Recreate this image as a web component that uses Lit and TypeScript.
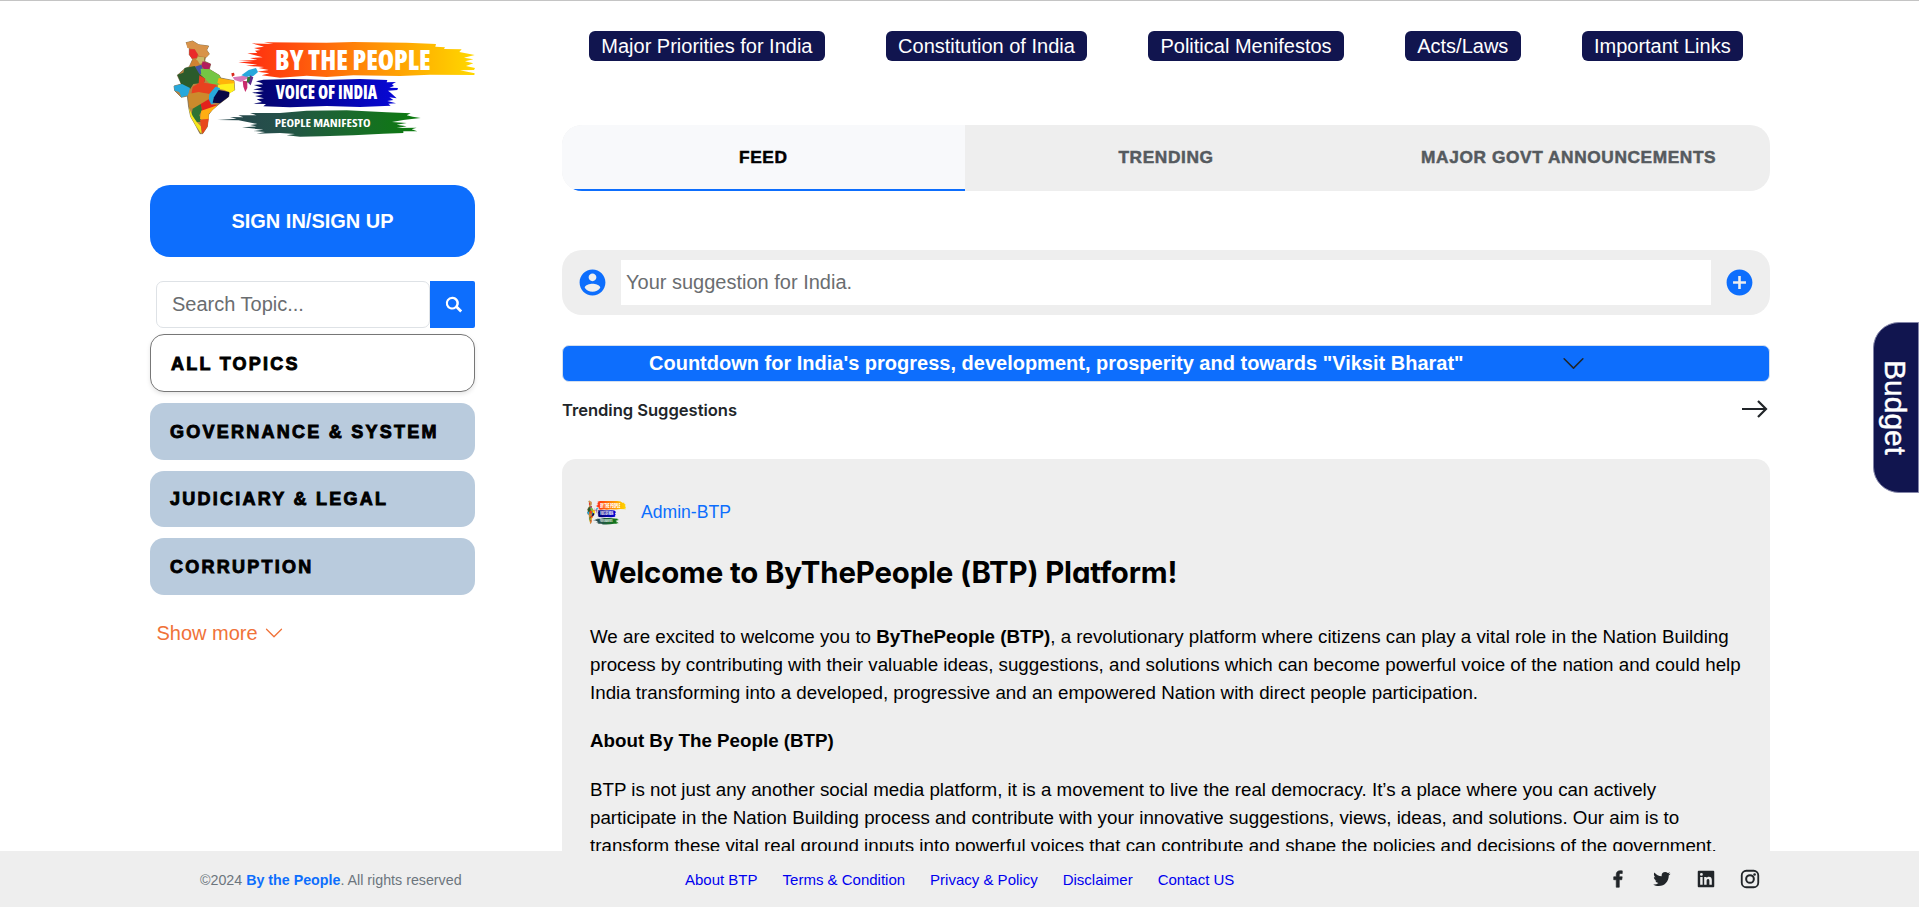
import { LitElement, html, css, svg } from "lit";
import { customElement } from "lit/decorators.js";
import { classMap } from "lit/directives/class-map.js";

const NAV = ["Major Priorities for India", "Constitution of India", "Political Menifestos", "Acts/Laws", "Important Links"];
const TABS = ["FEED", "TRENDING", "MAJOR GOVT ANNOUNCEMENTS"];
const TOPICS = ["ALL TOPICS", "GOVERNANCE & SYSTEM", "JUDICIARY & LEGAL", "CORRUPTION"];
const LINKS = ["About BTP", "Terms & Condition", "Privacy & Policy", "Disclaimer", "Contact US"];

const logoArt = svg`
  <defs>
    <linearGradient id="saffron" gradientUnits="userSpaceOnUse" x1="300" y1="0" x2="1005" y2="0">
      <stop offset="0" stop-color="#ff2a10"/><stop offset=".2" stop-color="#ff4a0e"/>
      <stop offset=".5" stop-color="#ff8408"/><stop offset=".8" stop-color="#ffb800"/>
      <stop offset="1" stop-color="#ffd800"/>
    </linearGradient>
    <linearGradient id="navy" gradientUnits="userSpaceOnUse" x1="340" y1="0" x2="775" y2="0">
      <stop offset="0" stop-color="#04046a"/><stop offset=".5" stop-color="#0404a0"/><stop offset="1" stop-color="#0808d8"/>
    </linearGradient>
    <linearGradient id="green" gradientUnits="userSpaceOnUse" x1="230" y1="0" x2="845" y2="0">
      <stop offset="0" stop-color="#27454c"/><stop offset=".3" stop-color="#25504a"/>
      <stop offset=".65" stop-color="#1a6a2c"/><stop offset="1" stop-color="#0b7c0c"/>
    </linearGradient>
  </defs>
  <path fill="url(#saffron)" d="M335 70L400 72L372 67L560 68L640 66L800 68L888 72L886 80L915 82L912 87L965 88L958 96L1004 105L972 113L1000 118L975 124L1000 130L978 138L1005 144L1002 150L960 151L1004 160L1003 165L870 164L780 168L640 166L560 171L500 167L420 173L365 166L388 160L352 155L386 150L356 144L372 141L318 137L352 134L295 127L340 124L296 122L352 120L330 114L368 112L322 100L352 99L345 92L362 90L342 84L372 80Z"/>
  <path fill="url(#navy)" d="M370 179L460 177L560 180L660 177L742 180L740 187L768 186L756 193L762 198L748 203L774 204L772 210L744 212L752 218L770 235L748 232L760 240L742 243L768 250L745 251L752 257L660 261L560 258L450 262L370 259L378 252L340 251L366 246L350 238L372 235L345 228L368 224L336 218L372 213L340 208L366 203L342 195L370 193L362 188L348 184Z"/>
  <path fill="url(#green)" d="M330 279L420 279L500 272L620 271L740 277L812 280L800 286L818 290L842 294L815 297L790 300L756 306L800 309L770 314L800 319L770 324L830 323L815 328L832 334L790 334L790 339L730 341L640 346L545 349L480 350L440 346L465 342L420 339L350 341L375 336L340 333L370 329L306 322L350 319L330 315L352 312L296 301L232 300L290 296L270 291L310 292L295 286L350 286Z"/>
  <path fill="#b98440" stroke="#6a5a3a" stroke-width="2" d="M138 68L158 63L176 74L206 78L200 90L208 102L196 114L194 124L212 132L208 148L238 166L242 174L282 182L284 210L268 218L266 230L240 250L216 270L206 284L202 320L188 341L180 341L168 318L152 290L146 262L142 228L124 232L104 212L102 198L124 192L112 166L134 146L148 140L158 118L148 104L148 84Z"/>
  <path fill="#d8934a" d="M138 68L158 63L176 74L206 78L200 90L208 102L200 112L178 108L164 88L142 84Z"/>
  <path fill="#ea2a2a" d="M148 88L164 88L174 104L170 114L156 116L148 104Z"/>
  <path fill="#c9bb6a" d="M174 110L192 112L192 126L180 132L168 120Z"/>
  <path fill="#cf8232" d="M160 116L174 122L178 134L164 142L148 140Z"/>
  <path fill="#b21d5c" d="M188 124L212 132L208 146L194 150L184 138Z"/>
  <path fill="#4054a8" d="M164 140L184 134L192 158L178 164Z"/>
  <path fill="#2b5b2b" d="M134 144L164 138L178 162L196 174L192 188L160 192L150 208L126 198L112 164L130 158Z"/>
  <path fill="#74c644" d="M182 146L208 148L238 166L242 176L234 196L208 190L184 166Z"/>
  <path fill="#e8411f" d="M178 166L196 176L192 188L230 194L228 212L206 222L176 218L154 224L158 200L176 190Z"/>
  <path fill="#ffb40a" d="M236 174L282 182L284 192L244 196L232 188Z"/>
  <path fill="#fff01c" d="M234 194L282 190L284 210L270 220L254 210L234 206Z"/>
  <path fill="#27a8dc" d="M102 198L126 192L150 204L144 226L124 232L118 216L104 212Z"/>
  <path fill="#27a8dc" d="M226 200L240 204L236 218L220 238L224 250L208 254L206 224Z"/>
  <path fill="#080845" d="M236 210L268 216L266 230L240 250L218 248L222 232Z"/>
  <path fill="#cc8a2c" d="M144 222L176 216L208 222L206 238L182 252L168 268L148 262Z"/>
  <path fill="#e3221c" d="M182 252L206 238L214 254L232 254L216 270L186 274Z"/>
  <path fill="#2e7434" d="M158 266L182 252L186 270L178 286L186 306L170 306L154 286Z"/>
  <path fill="#ffae12" d="M184 272L232 256L206 282L206 298L180 298Z"/>
  <path fill="#f4e61c" d="M146 262L158 288L170 306L184 320L184 341L168 318L152 290Z"/>
  <path fill="#e8481c" d="M180 300L206 296L202 320L188 341L184 328Z"/>
  <path fill="#d8281c" d="M274 160L282 158L284 166L276 170Z"/>
  <path fill="#d878b8" d="M278 172L306 168L322 164L326 174L302 186L284 180Z"/>
  <path fill="#27a8dc" d="M304 166L326 150L348 144L354 156L340 168L318 170Z"/>
  <path fill="#5e2a8c" d="M330 166L340 172L332 196L324 188Z"/>
  <path fill="#c92c6c" d="M308 182L322 184L322 204L316 216L310 200Z"/>
  <path fill="#2e7434" d="M322 172L332 170L328 186L320 188Z"/>
  <text class="mark" x="405" y="150" font-size="87" textLength="467" lengthAdjust="spacingAndGlyphs">BY THE PEOPLE</text>
  <text class="mark" x="407" y="238" font-size="56" textLength="304" lengthAdjust="spacingAndGlyphs">VOICE OF INDIA</text>
  <text class="mark small" x="404" y="320" font-size="33" textLength="288" lengthAdjust="spacingAndGlyphs">PEOPLE MANIFESTO</text>`;

const chevron = svg`<path fill-rule="evenodd" d="M1.646 4.646a.5.5 0 0 1 .708 0L8 10.293l5.646-5.647a.5.5 0 0 1 .708.708l-6 6a.5.5 0 0 1-.708 0l-6-6a.5.5 0 0 1 0-.708z"/>`;

@customElement("app-root")
export class AppRoot extends LitElement {
  static styles = css`
    :host { display: block; box-sizing: border-box; height: 907px; overflow: hidden; background: #fff;
      font-family: "Liberation Sans", Arial, sans-serif; font-size: 20px; color: #212529; }
    *, *::before, *::after { box-sizing: border-box; }
    h1, h2, h3, p { margin: 0; }
    svg { display: block; flex: none; fill: currentColor; }
    .page { display: flex; flex-direction: column; height: 100%; border-top: 1px solid #c4c4c4; }
    .columns { flex: 1; min-height: 0; display: flex; gap: 87px; padding: 0 149px 0 150px; }
    .side { width: 325px; flex: none; padding-top: 19px; }
    .main { flex: 1; min-width: 0; display: flex; flex-direction: column; }
    .mark { font-family: "Open Sans", sans-serif; font-weight: 800; font-stretch: 75%; fill: #fff; }
    .mark.small { font-weight: 700; font-stretch: 85%; }
    .logo { width: 325px; height: 130px; }
    .sign { width: 325px; height: 72px; margin-top: 35px; border: 0; border-radius: 20px; background: #0d6efd;
      color: #fff; font: 700 20px "Liberation Sans", sans-serif; }
    .search { display: flex; height: 47px; margin: 24px 0 0 6px; }
    .search input { flex: 1; min-width: 0; border: 1px solid #dee2e6; border-radius: 7px; padding: 0 15px; outline: 0;
      font: 20px "Liberation Sans", sans-serif; }
    input::placeholder { color: #6a6d70; opacity: 1; }
    .search button { display: grid; place-items: center; width: 45px; border: 0; padding: 0 0 0 2px; background: #0d6efd; color: #fff;
      border-radius: 0 2px 2px 0; }
    .topics { display: flex; flex-direction: column; gap: 11px; margin-top: 6px; }
    .topic { height: 56.5px; border-radius: 14px; background: #b9cbdd; padding: 2px 0 0 20px; display: flex; align-items: center;
      color: #000; font-size: 18px; font-weight: 700; letter-spacing: 2.25px; -webkit-text-stroke: .9px #000; }
    .topic.on { height: 58px; background: #fff; border: 1px solid #777; box-shadow: 0 2px 4px rgba(0,0,0,.1); }
    .more { display: flex; align-items: center; gap: 6px; margin: 26px 0 0 6.5px; color: #f07238; line-height: 24px; }
    .nav { display: flex; justify-content: space-between; padding: 30px 27px 0; }
    .nav a { height: 30px; line-height: 30px; padding: 0 12.3px; border-radius: 6px; background: #11154f; color: #fff; }
    .tabs { display: grid; grid-template-columns: repeat(3, 1fr); height: 66px; margin-top: 64px; border-radius: 20px;
      overflow: hidden; background: #eee; flex: none; }
    .tab { display: flex; align-items: center; justify-content: center; padding-bottom: 2px; font-size: 17.3px; font-weight: 700;
      letter-spacing: .6px; color: #555a5e; -webkit-text-stroke: .5px currentColor; }
    .tab.on { background: #f8f9fb; color: #000; border-bottom: 2px solid #0d6efd; padding: 0; }
    .suggest { display: flex; align-items: center; height: 65px; flex: none; margin-top: 59px; padding: 0 15px 0 14.5px; border-radius: 20px;
      background: #eee; color: #0d6efd; }
    .suggest svg { margin-bottom: 1px; }
    .suggest input { flex: 1; height: 45px; margin: 0 13px; border: 0; padding: 0 5.5px; background: #fff; outline: 0;
      font: 20px "Liberation Sans", sans-serif; }
    .count { display: flex; align-items: center; height: 37px; flex: none; margin-top: 30px; padding-left: 86px; gap: 97px;
      border: 1px solid #d3dfee; border-radius: 7px; background: #0d6efd; color: #212529; }
    .count strong { color: #fff; white-space: nowrap; }
    .heading { display: flex; justify-content: space-between; align-items: center; height: 28px; flex: none; margin-top: 13px; padding-right: 2px; }
    .heading h3 { font: 600 16.6px Inter, sans-serif; font-feature-settings: "cv11"; letter-spacing: -.04px; padding-top: 1px; }
    .card { flex: 1; min-height: 0; overflow: hidden; margin-top: 36px; padding: 40px 28px 0; border-radius: 14px 14px 0 0;
      background: #eee; color: #000; font-size: 18.75px; line-height: 28px; }
    .author { display: flex; align-items: center; gap: 15px; height: 26px; margin-left: -3px; font-size: 17.6px; line-height: 26px; color: #0d6efd; }
    .avatar { width: 39px; height: 25px; }
    .card h2 { margin-top: 30px; font: 650 29.4px/36px Inter, sans-serif; font-feature-settings: "cv11"; letter-spacing: -.15px; white-space: nowrap; }
    .card p { margin-top: 32px; }
    .card h3 { margin-top: 20px; font-size: 18.75px; }
    .card h3 + p { margin-top: 21px; }
    .foot { display: flex; align-items: center; height: 56px; flex: none; padding: 0 158px 0 200px; background: #eee; font-size: 15px; }
    .copy { width: 485px; font-size: 14.25px; color: #6c757d; padding-top: 2px; }
    .copy b { color: #0d6efd; }
    .links { flex: 1; display: flex; gap: 25px; }
    .links a { color: #0000ee; }
    .social { display: flex; gap: 22px; }
    .budget { position: absolute; right: 0; top: 322px; width: 46px; height: 171px; padding-right: 2px; display: flex; align-items: center; justify-content: center;
      writing-mode: vertical-rl; background: #11154f; color: #fff; border: 1px solid #8385a8; border-radius: 26px 0 0 26px; font-size: 30px;
      -webkit-text-stroke: .4px #fff; }
  `;

  render() {
    return html`
      <div class="page">
        <div class="columns">
          <aside class="side">
            <svg class="logo" viewBox="30 0 975 390">${logoArt}</svg>
            <button class="sign">SIGN IN/SIGN UP</button>
            <div class="search">
              <input placeholder="Search Topic..." />
              <button aria-label="Search"><svg width="22" height="22" viewBox="0 0 24 24"><path d="M10 3a7 7 0 1 0 4.19 12.61l4.6 4.6 2.12-2.12-4.6-4.6A7 7 0 0 0 10 3zm0 2.4a4.6 4.6 0 1 1 0 9.2 4.6 4.6 0 0 1 0-9.2z"/></svg></button>
            </div>
            <div class="topics">
              ${TOPICS.map((t, i) => html`<div class=${classMap({ topic: true, on: i === 0 })}>${t}</div>`)}
            </div>
            <div class="more">Show more <svg width="20" height="20" viewBox="0 0 16 16">${chevron}</svg></div>
          </aside>
          <main class="main">
            <nav class="nav">${NAV.map((n) => html`<a>${n}</a>`)}</nav>
            <div class="tabs">${TABS.map((t, i) => html`<div class=${classMap({ tab: true, on: i === 0 })}>${t}</div>`)}</div>
            <div class="suggest">
              <svg width="31" height="31" viewBox="0 0 24 24"><path d="M12 2C6.48 2 2 6.48 2 12s4.48 10 10 10 10-4.48 10-10S17.52 2 12 2zm0 3c1.66 0 3 1.34 3 3s-1.34 3-3 3-3-1.34-3-3 1.34-3 3-3zm0 14.2c-2.5 0-4.71-1.28-6-3.22.03-1.99 4-3.08 6-3.08 1.99 0 5.97 1.09 6 3.08-1.29 1.94-3.5 3.22-6 3.22z"/></svg>
              <input placeholder="Your suggestion for India." />
              <svg width="31" height="31" viewBox="0 0 24 24"><path d="M12 2C6.48 2 2 6.48 2 12s4.48 10 10 10 10-4.48 10-10S17.52 2 12 2zm5 11h-4v4h-2v-4H7v-2h4V7h2v4h4v2z"/></svg>
            </div>
            <div class="count">
              <strong>Countdown for India's progress, development, prosperity and towards "Viksit Bharat"</strong>
              <svg width="25" height="25" viewBox="0 0 16 16">${chevron}</svg>
            </div>
            <div class="heading">
              <h3>Trending Suggestions</h3>
              <svg width="26" height="18" viewBox="0 0 26 18" stroke="#212529" stroke-width="2.2"><path fill="none" d="M0 9H24M16 1l8 8-8 8"/></svg>
            </div>
            <article class="card">
              <div class="author">
                <svg class="avatar" viewBox="100 55 905 300" preserveAspectRatio="none">${logoArt}</svg>
                <span>Admin-BTP</span>
              </div>
              <h2>Welcome to ByThePeople (BTP) Platform!</h2>
              <p>We are excited to welcome you to <b>ByThePeople (BTP)</b>, a revolutionary platform where citizens can play a vital role in the Nation Building process by contributing with their valuable ideas, suggestions, and solutions which can become powerful voice of the nation and could help India transforming into a developed, progressive and an empowered Nation with direct people participation.</p>
              <h3>About By The People (BTP)</h3>
              <p>BTP is not just any another social media platform, it is a movement to live the real democracy. It’s a place where you can actively participate in the Nation Building process and contribute with your innovative suggestions, views, ideas, and solutions. Our aim is to transform these vital real ground inputs into powerful voices that can contribute and shape the policies and decisions of the government.</p>
            </article>
          </main>
        </div>
        <footer class="foot">
          <div class="copy">©2024 <b>By the People</b>. All rights reserved</div>
          <div class="links">${LINKS.map((l) => html`<a>${l}</a>`)}</div>
          <div class="social">
            <svg width="22" height="22" viewBox="0 0 24 24"><path stroke="currentColor" stroke-width=".7" d="M13.397 20.997v-8.196h2.765l.411-3.209h-3.176V7.548c0-.926.258-1.56 1.587-1.56h1.684V3.127A22.336 22.336 0 0 0 14.201 3c-2.444 0-4.122 1.492-4.122 4.231v2.355H7.332v3.209h2.753v8.202h3.312z"/></svg>
            <svg width="22" height="22" viewBox="-.5 -.5 25 25"><path d="M19.633 7.997c.013.175.013.349.013.523 0 5.325-4.053 11.461-11.46 11.461-2.282 0-4.402-.661-6.186-1.809.324.037.636.05.973.05a8.07 8.07 0 0 0 5.001-1.721 4.036 4.036 0 0 1-3.767-2.793c.249.037.499.062.761.062.361 0 .724-.05 1.061-.137a4.027 4.027 0 0 1-3.23-3.953v-.05c.537.299 1.16.486 1.82.511a4.022 4.022 0 0 1-1.796-3.354c0-.748.199-1.434.548-2.032a11.457 11.457 0 0 0 8.306 4.215c-.062-.3-.1-.611-.1-.923a4.026 4.026 0 0 1 4.028-4.028c1.16 0 2.207.486 2.943 1.272a7.957 7.957 0 0 0 2.556-.973 4.02 4.02 0 0 1-1.771 2.22 8.073 8.073 0 0 0 2.319-.624 8.645 8.645 0 0 1-2.019 2.083z"/></svg>
            <svg width="22" height="22" viewBox="0 0 24 24"><path d="M20 3H4a1 1 0 0 0-1 1v16a1 1 0 0 0 1 1h16a1 1 0 0 0 1-1V4a1 1 0 0 0-1-1zM8.339 18.337H5.667v-8.59h2.672v8.59zM7.003 8.574a1.548 1.548 0 1 1 0-3.096 1.548 1.548 0 0 1 0 3.096zm11.335 9.763h-2.669V14.16c0-.996-.018-2.277-1.388-2.277-1.39 0-1.601 1.086-1.601 2.207v4.248h-2.667v-8.59h2.56v1.174h.037c.355-.675 1.227-1.387 2.524-1.387 2.704 0 3.203 1.778 3.203 4.092v4.71z"/></svg>
            <svg width="22" height="22" viewBox="0 0 24 24"><rect x="3" y="3" width="18" height="18" rx="5" fill="none" stroke="currentColor" stroke-width="2"/><circle cx="12" cy="12" r="4.2" fill="none" stroke="currentColor" stroke-width="2.2"/><circle cx="17" cy="7" r="1.4"/></svg>
          </div>
        </footer>
      </div>
      <div class="budget">Budget</div>
    `;
  }
}
